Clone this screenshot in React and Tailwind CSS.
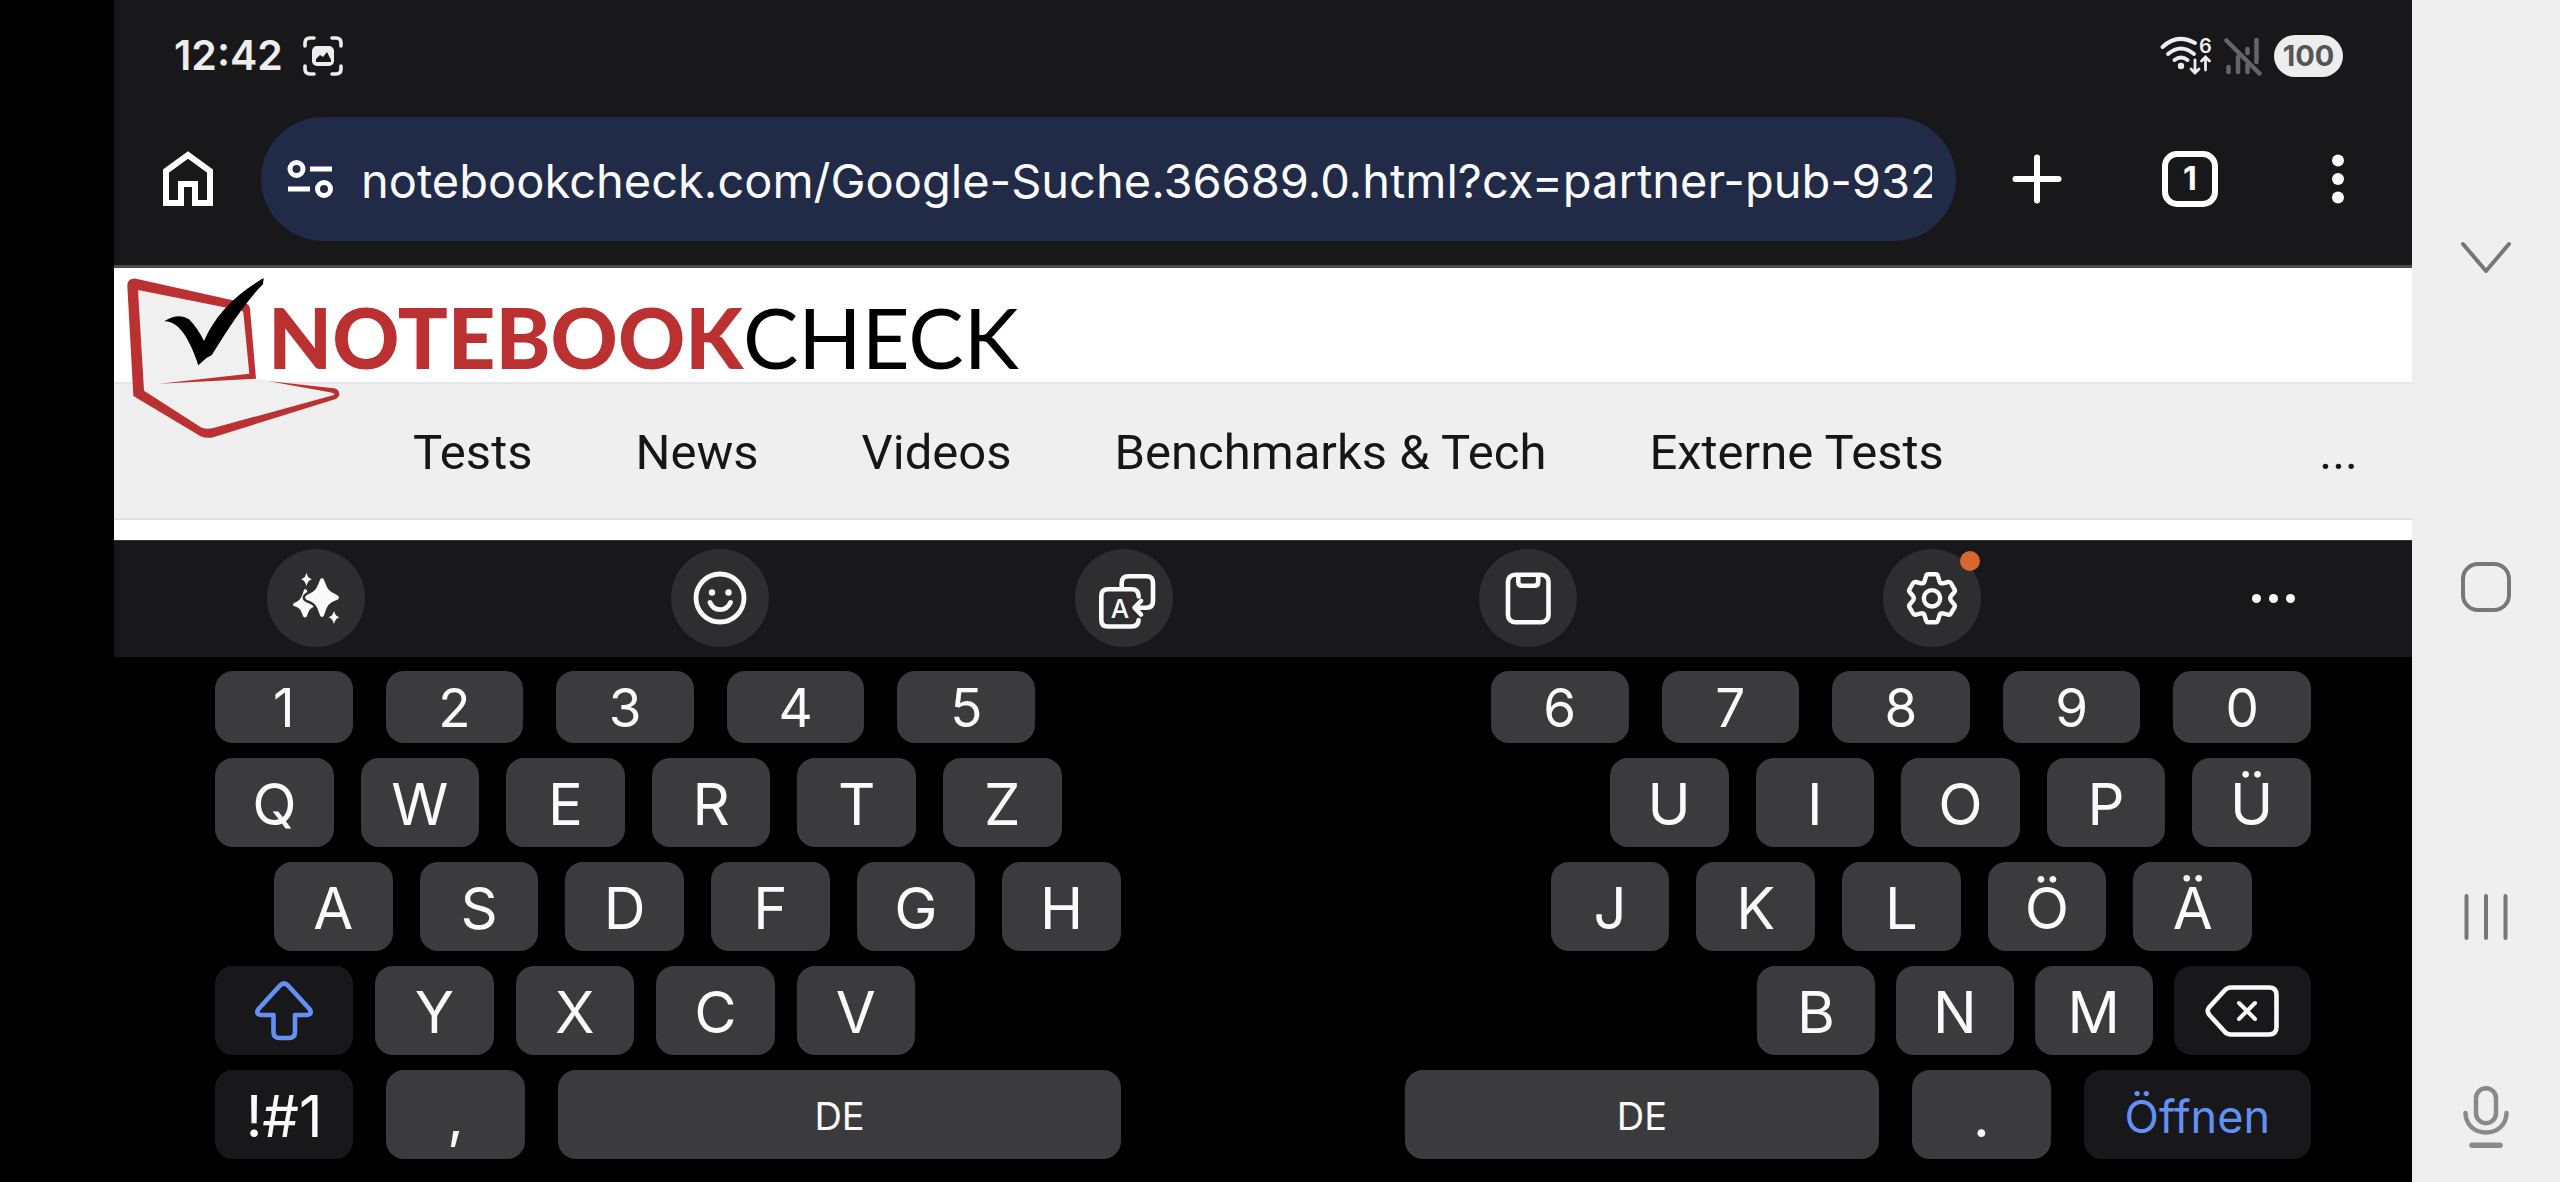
import { useState } from "react"

const HomeIcon = () => (
  <svg width="50" height="56" viewBox="0 0 50 56" fill="none" stroke="#fff" strokeWidth="6">
    <path d="M3 20 25 4l22 16v32H32V33H18v19H3z" />
  </svg>
)

const TuneIcon = () => (
  <svg width="47" height="40" viewBox="0 0 47 40" fill="none" stroke="#fff" strokeWidth="5">
    <circle cx="9.5" cy="10" r="6.5" />
    <path d="M23 10h22M1 30h22" />
    <circle cx="37" cy="30" r="6.5" />
  </svg>
)

const ScreenshotIcon = () => (
  <svg width="40" height="40" viewBox="0 0 40 40" fill="none" stroke="#ededed" strokeWidth="3.6" strokeLinecap="round">
    <path d="M2 10V7q0-5 5-5h4M29 2h4q5 0 5 5v3M38 30v3q0 5-5 5h-4M11 38H7q-5 0-5-5v-3" />
    <rect x="9" y="10" width="22" height="20" rx="5" fill="#ededed" stroke="none" />
    <path d="M13 26v-3l4-4 3 2 4-5 4 8v2z" fill="#18181a" stroke="none" />
  </svg>
)

const WifiIcon = () => (
  <svg className="overflow-visible" width="52" height="40" viewBox="0 0 52 40" fill="none" stroke="#ededed" strokeWidth="4" strokeLinecap="round">
    <path d="M2.5 11Q17-3 35 7" />
    <path d="M8 18q13-11 26 0" />
    <path d="M14.5 24q6.500-5 13 0" />
    <circle cx="21" cy="30" r="3.200" fill="#ededed" stroke="none" />
    <path d="M35 24v12.500M31 33l4 4 4-4M45.500 34V21.500M41.500 25l4-4 4 4" strokeWidth="2.800" />
    <text x="39" y="16.500" fontSize="20" fontWeight="600" fontFamily="Inter, sans-serif" fill="#ededed" stroke="none">6</text>
  </svg>
)

const NoSignalIcon = () => (
  <svg width="38" height="40" viewBox="0 0 38 40" fill="none" stroke="#666668" strokeWidth="4.500" strokeLinecap="round">
    <path d="M4.500 31v5M14 21v15M23.500 13v4M23.500 29v7M32.500 4v22" />
    <path d="m2.500 4.500 33 33" />
  </svg>
)

const PlusIcon = () => (
  <svg width="50" height="50" viewBox="0 0 50 50" stroke="#fff" strokeWidth="6" strokeLinecap="round">
    <path d="M25 3.500v43M3.500 25h43" />
  </svg>
)

const DotsIcon = () => (
  <svg width="12" height="50" viewBox="0 0 12 50" fill="#fff">
    <circle cx="6" cy="6.500" r="6" />
    <circle cx="6" cy="25" r="6" />
    <circle cx="6" cy="43.500" r="6" />
  </svg>
)

const LogoMark = () => (
  <svg width="230" height="172" viewBox="12 24 690 516" aria-hidden="true">
    <path fill="#f0f0f0" d="M80 85 405 145 430 352 475 363 672 398 290 512 95 395z" />
    <path
      fill="#bb3131"
      d="M148 371 438 356 420 146Q418 131 402 128L78 56Q52 54 52 78L70 408 272 529Q290 537 312 531L675 418Q688 412 688 401 687 388 672 385L472 363 660 397Q676 400 672 405L310 504Q290 509 275 503L102 392 84 90 385 150Q398 151 400 158L418 341z"
    />
    <path d="M163 184Q205 157 237 178 262 203 282 243 330 130 461 54L459 73Q400 130 305 286L290 293 265 316Q235 225 200 197 182 184 163 184z" />
  </svg>
)

const SparklesIcon = () => (
  <svg width="98" height="98" viewBox="0 0 98 98" fill="#fafafc">
    <path d="M38 40q2 0 3 5c1 5 2 7 8 10q2 1 0 2c-6 2-7 4-9 10q-2 3-4 0c-2-6-3-8-9-10q-2-1 0-3c5-2 7-4 9-10q1-4 2-4z" />
    <path
      d="M55 29q1.500 0 2.500 3c3 8 4 10 12.500 14q4 2.500 0 5c-8.500 3-9.500 5-12.500 14-1 4-4 4-5 0-3-9-4-11-12.500-14q-4-2.500 0-5c8.500-4 9.500-6 12.500-14q1-3 2.500-3z"
      stroke="#2e2e30"
      strokeWidth="5"
      paintOrder="stroke"
    />
    <path d="M39.500 24c1.500 4 2 5 5.500 6.300-3.500 1.500-4 2.500-5.500 6.700-1.500-4.200-2-5.200-5.500-6.700 3.500-1.300 4-2.300 5.500-6.300zM67 62c1.500 4 2 5 5.500 6.300-3.500 1.500-4 2.500-5.500 6.700-1.500-4.200-2-5.200-5.500-6.700C65 67 65.500 66 67 62z" />
  </svg>
)

const SmileyIcon = () => (
  <svg width="98" height="98" viewBox="0 0 98 98" fill="none" stroke="#fafafc" strokeWidth="4.800" strokeLinecap="round">
    <circle cx="49" cy="49" r="24" />
    <path d="M39 53.500c4 9.500 16 9.500 20.500 0" />
    <circle cx="41" cy="43.500" r="3.200" fill="#fafafc" stroke="none" />
    <circle cx="57.500" cy="43.500" r="3.200" fill="#fafafc" stroke="none" />
  </svg>
)

const TranslateIcon = () => (
  <svg width="98" height="98" viewBox="0 0 98 98" fill="none" stroke="#fafafc" strokeWidth="4.600" strokeLinecap="round" strokeLinejoin="round">
    <path d="M46.700 39v-5q0-6.700 6.700-6.700h18q6.600 0 6.600 6.700v18q0 6.700-6.600 6.700H60M66 52l-6.500 6.700L66 65.500" />
    <path d="M63.700 47.500q0-7.200-7-7.200H33q-6.700 0-6.700 6.700v24q0 6.500 6.700 6.500h23.700q6.500 0 7-6.500" />
    <text x="45" y="69" textAnchor="middle" fontSize="26" fontWeight="500" fontFamily="Inter, sans-serif" fill="#fafafc" stroke="none">A</text>
  </svg>
)

const ClipboardIcon = () => (
  <svg width="98" height="98" viewBox="0 0 98 98" fill="none" stroke="#fafafc" strokeWidth="4.600">
    <rect x="29" y="25.700" width="40.500" height="47.500" rx="7" />
    <path d="M39.300 26v7q0 3.700 3.700 3.700h12.500q3.700 0 3.700-3.700v-7" />
  </svg>
)

const GearIcon = () => (
  <svg width="98" height="98" viewBox="0 0 98 98" fill="none" stroke="#fafafc" strokeWidth="4.400" strokeLinejoin="round">
    <path d="M45 25.300h8q1.500 0 2 2l1.500 5q.700 2.500 3.500 2l5-1.300q2-.500 3 1.300l3.500 6q1 1.700-.500 3.200l-3 3.500q-1.600 2.300 0 4.600l3 3.500q1.500 1.500.500 3.200l-3.500 6q-1 1.800-3 1.300l-5-1.300q-2.800-.500-3.500 2l-1.500 5q-.500 2-2 2h-8q-1.500 0-2-2l-1.500-5q-.700-2.500-3.500-2l-5 1.300q-2 .500-3-1.300l-3.500-6q-1-1.700.500-3.200l3-3.500q1.600-2.300 0-4.600l-3-3.500q-1.500-1.500-.500-3.200l3.500-6q1-1.800 3-1.300l5 1.300q2.800.500 3.500-2l1.500-5q.500-2 2-2z" />
    <circle cx="49" cy="49.300" r="8.200" />
  </svg>
)

const ShiftIcon = () => (
  <svg width="58" height="60" viewBox="0 0 58 60" fill="none" stroke="#6390f5" strokeWidth="4.600" strokeLinejoin="round">
    <path d="M25 4.500q4-4 8 0L54.500 28q3.500 5.500-3 6H40v17q0 6-6 6H24.500q-6 0-6-6V34H6.500q-6.500-.500-3-6z" />
  </svg>
)

const BackspaceIcon = () => (
  <svg width="74" height="52" viewBox="0 0 74 52" fill="none" stroke="#fafafc" strokeWidth="4.600" strokeLinecap="round" strokeLinejoin="round">
    <path d="M26 2.500h38q7.500 0 7.500 7.500v32q0 7.500-7.500 7.500H26q-4 0-6.500-3L4 29.500q-2.500-3.500 0-7L19.500 5.500q2.500-3 6.500-3z" />
    <path d="m34 18 16 16M50 18 34 34" strokeWidth="4" />
  </svg>
)

const siteLinks = ["Tests", "News", "Videos", "Benchmarks & Tech", "Externe Tests"]

const keyboardTools = [
  { title: "Assistent", icon: <SparklesIcon /> },
  { title: "Emojis", icon: <SmileyIcon /> },
  { title: "Übersetzen", icon: <TranslateIcon /> },
  { title: "Zwischenablage", icon: <ClipboardIcon /> },
  { title: "Einstellungen", icon: <GearIcon />, badge: true },
]

const Key = ({ children, className = "flex-[6] bg-[#3b3b3d] pt-1 text-[58px] text-[#fafafc]", title }) => (
  <button aria-label={title} className={`flex h-full min-w-0 items-center justify-center rounded-[18px] ${className}`}>
    {children}
  </button>
)

const Letters = ({ keys }) => keys.split("").map(k => <Key key={k}>{k}</Key>)

const Digits = ({ keys }) =>
  keys.split("").map(k => (
    <Key key={k} className="flex-[6] bg-[#3b3b3d] pt-1 text-[53px] text-[#fafafc]">{k}</Key>
  ))

const BrowserBar = () => {
  const [url, setUrl] = useState("notebookcheck.com/Google-Suche.36689.0.html?cx=partner-pub-9323363")

  return (
    <header className="border-b-3 border-[#4a4a4c] bg-[#18181a]">
      <div className="flex h-28 items-center justify-between pr-[69px] pl-[60px]">
        <div className="flex items-center gap-5">
          <span className="text-[41px] font-semibold text-[#ededed]">12:42</span>
          <ScreenshotIcon />
        </div>
        <div className="flex items-center gap-3">
          <WifiIcon />
          <NoSignalIcon />
          <span className="flex h-[42px] w-[69px] items-center justify-center rounded-full bg-[#ededed] text-[29px] font-bold text-[#555]">100</span>
        </div>
      </div>

      <div className="flex items-center pt-[5px] pr-[68px] pb-6 pl-[49px]">
        <button title="Startseite"><HomeIcon /></button>
        <div className="mr-14 ml-12 flex h-[124px] min-w-0 flex-1 items-center gap-[27px] rounded-full bg-[#212a47] pr-6 pl-[26px]">
          <button title="Websiteinformationen" className="shrink-0"><TuneIcon /></button>
          <input
            aria-label="Adresse"
            value={url}
            onChange={e => setUrl(e.target.value)}
            className="min-w-0 flex-1 bg-transparent pt-1 text-[47px] text-[#fafafc] outline-none"
          />
        </div>
        <button title="Neuer Tab"><PlusIcon /></button>
        <button title="Tabs" className="mr-[114px] ml-[100px] flex size-14 items-center justify-center rounded-[15px] border-6 border-white text-[32px] font-bold text-white">
          1
        </button>
        <button title="Menü"><DotsIcon /></button>
      </div>
    </header>
  )
}

const Site = () => (
  <main className="relative bg-white pb-5 text-[#161616]">
    <div className="flex h-29 items-center border-b-2 border-[#e6e6e6] pt-6 pl-[154px]">
      <a href="#start" className="font-['Lato',sans-serif] text-[83px] leading-[90px] text-black">
        <span className="font-black text-[#bb3131]">NOTEBOOK</span>CHECK
      </a>
    </div>
    <nav className="flex h-34 items-center gap-[103px] border-b-2 border-[#e0e0e0] bg-[#efefef] pt-1 pr-[54px] pl-[299px] font-['Roboto',sans-serif] text-[49px]">
      {siteLinks.map(label => (
        <a key={label} href="#nav" className="whitespace-nowrap">{label}</a>
      ))}
      <a href="#mehr" className="ml-auto">...</a>
    </nav>
    <div className="absolute top-0 left-0"><LogoMark /></div>
  </main>
)

const Keyboard = () => (
  <section className="flex flex-1 flex-col">
    <div className="flex h-[117px] items-start border-t border-[#343436] bg-[#18181a] pt-2">
      {keyboardTools.map(({ title, icon, badge }) => (
        <div key={title} className="flex flex-1 justify-center">
          <button title={title} className="relative size-[98px] rounded-full bg-[#2e2e30]">
            {icon}
            {badge && <span className="absolute top-[2px] left-[77px] size-5 rounded-full bg-[#d9662f]" />}
          </button>
        </div>
      ))}
      <button title="Mehr" className="flex h-[98px] w-[278px] items-center justify-center gap-2">
        <span className="size-[9px] rounded-full bg-[#fafafc]" />
        <span className="size-[9px] rounded-full bg-[#fafafc]" />
        <span className="size-[9px] rounded-full bg-[#fafafc]" />
      </button>
    </div>

    <div className="flex flex-col gap-[15px] px-[101px] pt-3.5 pb-5">
      <div className="flex h-18 gap-[33px]">
        <Digits keys="12345" />
        <span className="flex-[17]" />
        <Digits keys="67890" />
      </div>
      <div className="flex h-[89px] gap-[27px]">
        <Letters keys="QWERTZ" />
        <span className="flex-[25]" />
        <Letters keys="UIOPÜ" />
      </div>
      <div className="flex h-[89px] gap-[27px] px-[59px]">
        <Letters keys="ASDFGH" />
        <span className="flex-[19]" />
        <Letters keys="JKLÖÄ" />
      </div>
      <div className="flex h-[89px]">
        <div className="flex flex-[700] gap-[22px]">
          <Key title="Umschalt" className="flex-[7] bg-[#18181a]"><ShiftIcon /></Key>
          <Letters keys="YXCV" />
        </div>
        <span className="flex-[842]" />
        <div className="flex flex-[554] gap-[21px]">
          <Letters keys="BNM" />
          <Key title="Löschen" className="flex-[7] bg-[#18181a]"><BackspaceIcon /></Key>
        </div>
      </div>
      <div className="flex h-[89px] gap-[33px]">
        <Key className="flex-[14] bg-[#18181a] pt-1 text-[58px] text-[#fafafc]">!#1</Key>
        <Key className="flex-[14] bg-[#3b3b3d] pt-1 text-[58px] text-[#fafafc]">,</Key>
        <Key className="flex-[57] bg-[#3b3b3d] pt-1 text-[38px] text-[#fafafc]">DE</Key>
        <span className="flex-[22]" />
        <Key className="flex-[48] bg-[#3b3b3d] pt-1 text-[38px] text-[#fafafc]">DE</Key>
        <Key className="flex-[14] bg-[#3b3b3d] pt-1 text-[58px] text-[#fafafc]">.</Key>
        <Key className="flex-[23] bg-[#18181a] pt-1 text-[45px] text-[#6390f5]">Öffnen</Key>
      </div>
    </div>
  </section>
)

const SystemNav = () => (
  <aside className="flex w-37 shrink-0 flex-col bg-[#efefef] pt-[92px] pb-[30px]">
    <button title="Tastatur ausblenden" className="flex flex-1 items-center justify-center">
      <svg width="50" height="32" viewBox="0 0 50 32" fill="none" stroke="#777" strokeWidth="4" strokeLinecap="round" strokeLinejoin="round">
        <path d="m2 3 23 27L48 3" />
      </svg>
    </button>
    <button title="Start" className="flex flex-1 items-center justify-center">
      <span className="size-[50px] rounded-[17px] border-4 border-[#777]" />
    </button>
    <button title="Letzte Apps" className="flex flex-1 items-center justify-center">
      <svg width="44" height="48" viewBox="0 0 44 48" stroke="#777" strokeWidth="4" strokeLinecap="round">
        <path d="M2.500 3v42M22 3v42M41.500 3v42" />
      </svg>
    </button>
    <button title="Spracheingabe" className="flex h-[70px] items-center justify-center">
      <svg width="46" height="62" viewBox="0 0 46 62" fill="none" stroke="#8a8a8a" strokeWidth="4.500" strokeLinecap="round">
        <rect x="13" y="2.200" width="20" height="35" rx="10" />
        <path d="M2.500 27C3 53 43 53 43.500 27" />
        <path d="M9 59.200h28" strokeWidth="5.500" />
      </svg>
    </button>
  </aside>
)

const App = () => (
  <div className="flex min-h-screen bg-black pl-[114px] font-['Inter',sans-serif]">
    <div className="flex min-w-0 flex-1 flex-col">
      <BrowserBar />
      <Site />
      <Keyboard />
    </div>
    <SystemNav />
  </div>
)

export default App
